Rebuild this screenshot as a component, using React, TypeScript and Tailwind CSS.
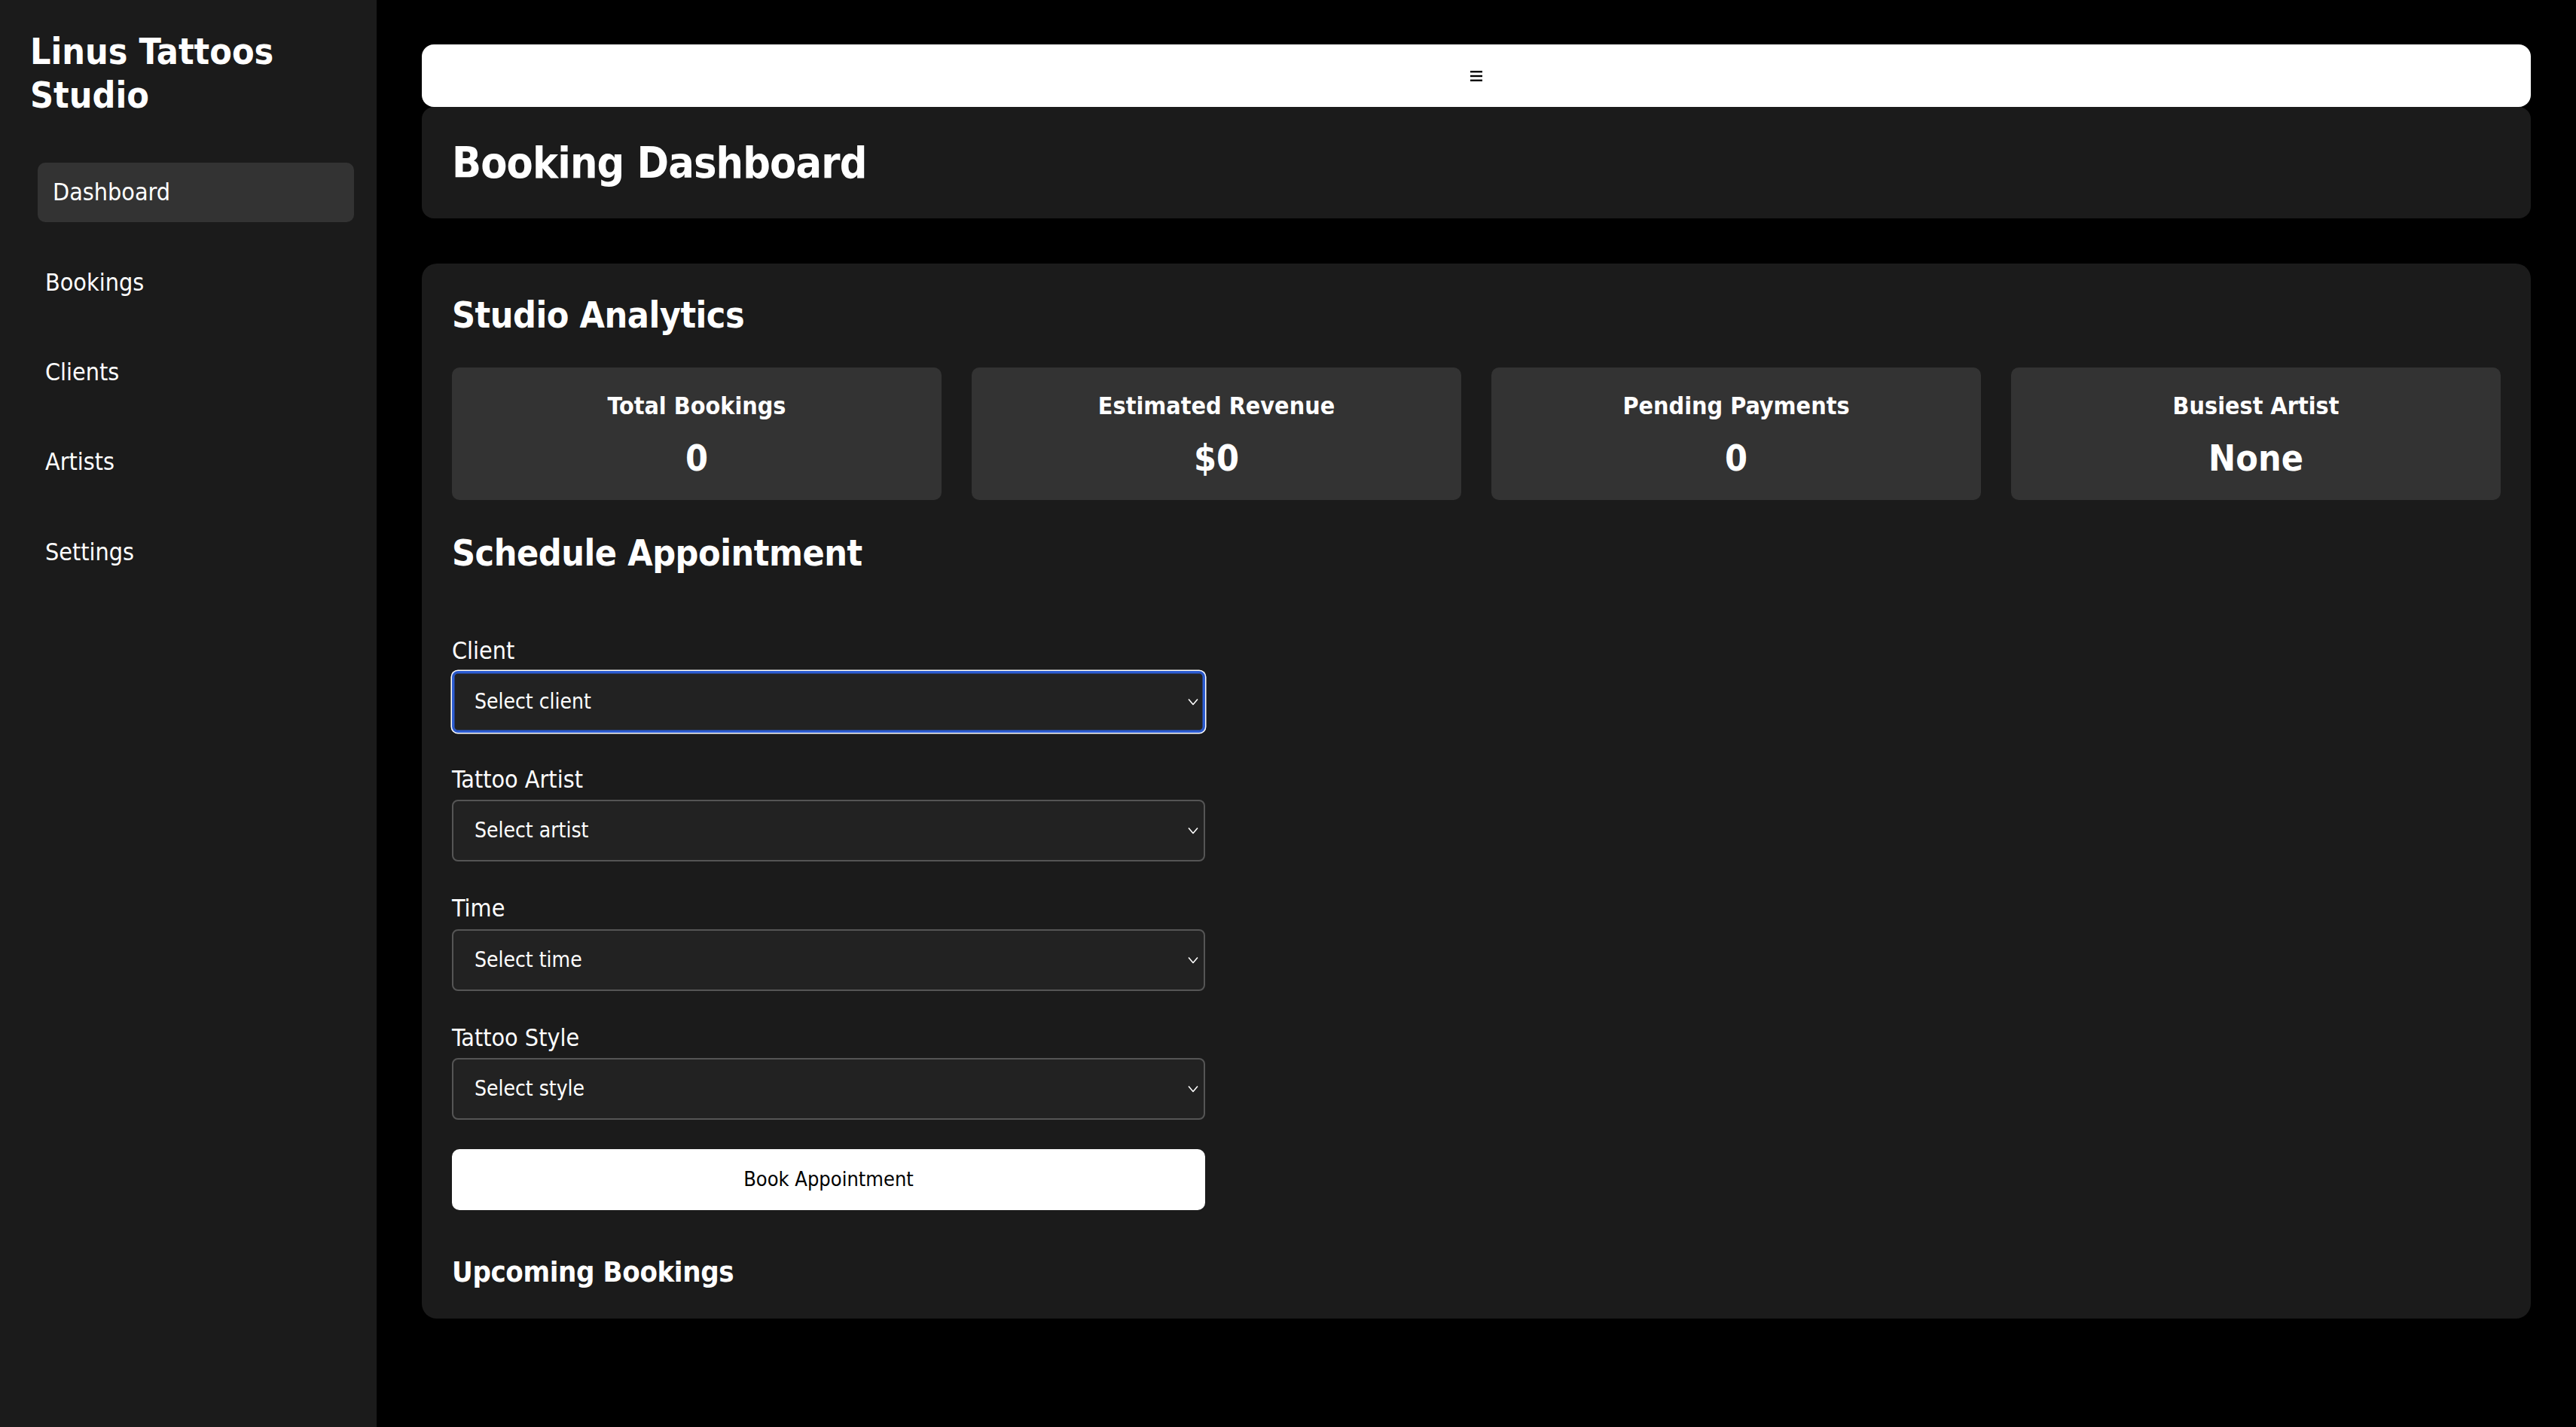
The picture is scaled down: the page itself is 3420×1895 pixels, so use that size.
import React from 'react';

const navItems = ['Dashboard', 'Bookings', 'Clients', 'Artists', 'Settings'];

const stats = [
  { label: 'Total Bookings', value: '0' },
  { label: 'Estimated Revenue', value: '$0' },
  { label: 'Pending Payments', value: '0' },
  { label: 'Busiest Artist', value: 'None' },
];

const fields = [
  { label: 'Client', placeholder: 'Select client', focused: true },
  { label: 'Tattoo Artist', placeholder: 'Select artist', focused: false },
  { label: 'Time', placeholder: 'Select time', focused: false },
  { label: 'Tattoo Style', placeholder: 'Select style', focused: false },
];

const Chevron = () => (
  <svg width="14" height="9" viewBox="0 0 14 9" fill="none" className="pointer-events-none absolute right-[9px] top-1/2 -translate-y-1/2">
    <polyline points="1,1 7,8 13,1" stroke="#ffffff" strokeWidth="1.5" />
  </svg>
);

const SelectField: React.FC<{ label: string; placeholder: string; focused: boolean; last: boolean }> = ({
  label,
  placeholder,
  focused,
  last,
}) => {
  return (
    <div className={last ? 'flex flex-col mb-[39px]' : 'flex flex-col mb-[43px]'}>
      <label className="text-[32px] leading-[1.2] text-white mb-2">{label}</label>
      <div className="relative">
        <select
          defaultValue=""
          className={
            focused
              ? 'appearance-none w-full h-[82px] rounded-[8px] bg-[#222222] text-white text-[28px] pl-[28px] border-2 border-[#2c5cd1] outline-none shadow-[0_0_0_1.5px_#ffffff,inset_0_0_0_1.5px_#2c5cd1]'
              : 'appearance-none w-full h-[82px] rounded-[8px] bg-[#222222] text-white text-[28px] pl-[28px] border-2 border-[#555555] outline-none'
          }
        >
          <option value="">{placeholder}</option>
        </select>
        <Chevron />
      </div>
    </div>
  );
};

export default function App() {
  return (
    <div className="flex min-h-screen bg-black text-white font-['DejaVu_Sans_Condensed','DejaVu_Sans',sans-serif] font-stretch-condensed">
      {/* sidebar */}
      <aside className="w-[500px] shrink-0 bg-[#1b1b1b] px-10 pt-10">
        <h1 className="text-[48px] leading-[1.2] font-bold text-white">
          Linus Tattoos
          <br />
          Studio
        </h1>
        <nav className="flex flex-col gap-[41px] mt-[61px]">
          {navItems.map((item, i) => (
            <div
              key={item}
              className={
                i === 0
                  ? 'px-5 py-5 text-[32px] leading-[1.2] rounded-[10px] bg-[#333333] translate-x-[10px]'
                  : 'px-5 py-5 text-[32px] leading-[1.2]'
              }
            >
              {item}
            </div>
          ))}
        </nav>
      </aside>

      {/* main */}
      <main className="flex-1 px-[60px] pt-[59px] pb-[60px]">
        <div className="h-[83px] bg-white rounded-2xl flex items-center justify-center">
          <svg width="16" height="14" viewBox="0 0 16 14" aria-label="menu">
            <rect x="0" y="0" width="16" height="2.4" fill="#000000" />
            <rect x="0" y="5.8" width="16" height="2.4" fill="#000000" />
            <rect x="0" y="11.6" width="16" height="2.4" fill="#000000" />
          </svg>
        </div>
        <div className="bg-[#1b1b1b] rounded-2xl p-10">
          <h1 className="text-[57px] leading-[1.2] font-bold tracking-[-0.015em]">Booking Dashboard</h1>
        </div>

        <section className="bg-[#1b1b1b] rounded-[20px] px-10 pt-10 pb-[38px] mt-[60px]">
          <h2 className="text-[48px] leading-[1.2] font-bold tracking-[-0.01em] mb-10">Studio Analytics</h2>
          <div className="grid grid-cols-4 gap-10">
            {stats.map((s) => (
              <div key={s.label} className="bg-[#333333] rounded-[10px] h-[176px] pt-8 flex flex-col items-center gap-[22px]">
                <div className="text-[32px] leading-[1.2] font-bold">{s.label}</div>
                <div className="text-[48px] leading-[1.2] font-bold">{s.value}</div>
              </div>
            ))}
          </div>

          <h2 className="text-[48px] leading-[1.2] font-bold tracking-[-0.01em] mt-[42px] mb-[81px]">
            Schedule Appointment
          </h2>
          <form className="w-[1000px] flex flex-col">
            {fields.map((f, i) => (
              <SelectField key={f.label} {...f} last={i === fields.length - 1} />
            ))}
            <button type="button" className="h-[81px] bg-white text-black rounded-[10px] text-[27px]">
              Book Appointment
            </button>
          </form>

          <h3 className="text-[38px] leading-[1.2] font-bold tracking-[-0.01em] mt-[60px]">Upcoming Bookings</h3>
        </section>
      </main>
    </div>
  );
}
